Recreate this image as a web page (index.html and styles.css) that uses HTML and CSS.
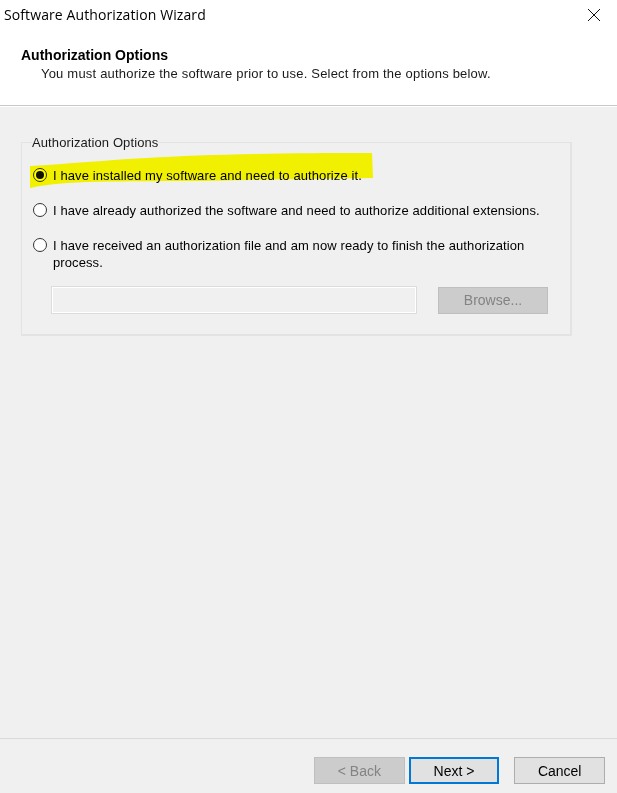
FILE: index.html
```html
<!DOCTYPE html>
<html>
<head>
  <title>Software Authorization Wizard</title>
  <link rel="stylesheet" href="styles.css">
</head>
<body>
  <div class="window">
    <div class="titlebar">
      <span class="title">Software Authorization Wizard</span>
      <span class="close">
        <svg width="14" height="14" viewBox="0 0 14 14"><path d="M1 1 L13 13 M13 1 L1 13" stroke="#111" stroke-width="1" fill="none"/></svg>
      </span>
    </div>

    <div class="header">
      <h1>Authorization Options</h1>
      <p>You must authorize the software prior to use. Select from the options below.</p>
    </div>

    <div class="content">
      <fieldset class="group">
        <legend>Authorization Options</legend>

        <label class="option">
          <span class="radio checked"></span>
          <span>I have installed my software and need to authorize it.</span>
        </label>
        <label class="option">
          <span class="radio"></span>
          <span>I have already authorized the software and need to authorize additional extensions.</span>
        </label>
        <label class="option">
          <span class="radio"></span>
          <span>I have received an authorization file and am now ready to finish the authorization process.</span>
        </label>

        <div class="file-row">
          <div class="file-box"></div>
          <div class="btn disabled browse">Browse...</div>
        </div>
      </fieldset>

      <!-- marker highlight drawn over the first option -->
      <svg class="marker" width="360" height="40" viewBox="0 0 360 40">
        <path d="M3 13 C40 11 80 7 120 5 C180 1 260 0 345 0 L346 25 C300 26 260 26 220 27 C160 29 90 27 40 30 C25 31 12 33 3 35 Z" fill="#ffff00"/>
      </svg>
    </div>

    <div class="footer">
      <div class="btn disabled">&lt; Back</div>
      <div class="btn primary">Next &gt;</div>
      <div class="btn cancel">Cancel</div>
    </div>
  </div>
</body>
</html>
```

FILE: styles.css
```css
/* dialog window */
body {
  margin: 0;
  font-family: "Liberation Sans", Arial, sans-serif;
  color: #000;
}

.window {
  display: flex;
  flex-direction: column;
  height: 793px;
  background-color: #f0f0f0;
}

.titlebar {
  background-color: #fff;
  height: 30px;
  display: flex;
  align-items: center;
  justify-content: space-between;
  padding: 0 0 0 4px;
}

.title {
  font-family: "Open Sans", "Liberation Sans", sans-serif;
  font-size: 14px;
  letter-spacing: 0.1px;
  margin-top: -2px;
}

.close {
  width: 46px;
  display: flex;
  justify-content: center;
}

.header {
  background-color: #fff;
  height: 75px;
  border-bottom: 1px solid #c9c9c9;
  padding-left: 21px;
}

.header h1 {
  margin: 17px 0 0;
  font-size: 14px;
  font-weight: bold;
  letter-spacing: 0;
}

.header p {
  margin: 3px 0 0 20px;
  font-size: 13px;
  letter-spacing: 0.2px;
  color: #1a1a1a;
}

.content {
  flex: 1;
  position: relative;
  padding: 28px 45px 0 21px;
  border-top: 1px solid #fff;
}

.group {
  margin: 0;
  padding: 17px 0 20px 11px;
  border: 2px solid #e3e3e3;
  border-width: 1px 2px 2px 1px;
}

.group legend {
  font-size: 13px;
  letter-spacing: 0.1px;
  padding: 0;
  margin-left: -1px;
  color: #1a1a1a;
}

.option {
  display: flex;
  align-items: flex-start;
  gap: 6px;
  font-size: 13px;
  letter-spacing: 0.1px;
  line-height: 17px;
  margin-bottom: 18px;
  padding-right: 30px;
}

.radio {
  flex: none;
  width: 12px;
  height: 12px;
  border: 1px solid #333;
  border-radius: 50%;
  background-color: #fff;
  margin-top: 1px;
  display: flex;
  align-items: center;
  justify-content: center;
}

.radio.checked::after {
  content: "";
  width: 8px;
  height: 8px;
  border-radius: 50%;
  background-color: #111;
}

.file-row {
  display: flex;
  align-items: center;
  gap: 21px;
  margin: -3px 0 0 18px;
}

.file-box {
  width: 364px;
  height: 26px;
  border: 1px solid #dcdcdc;
  box-shadow: inset 0 0 0 1px #fff;
  background-color: #f0f0f0;
}

.btn {
  box-sizing: border-box;
  height: 27px;
  display: flex;
  align-items: center;
  justify-content: center;
  font-size: 13px;
  border: 1px solid #adadad;
  background-color: #e1e1e1;
}

.btn.disabled {
  background-color: #cccccc;
  border-color: #bfbfbf;
  color: #838383;
}

.browse {
  width: 110px;
  font-size: 14px;
}

.marker {
  position: absolute;
  left: 27px;
  top: 46px;
  mix-blend-mode: multiply;
}

.footer {
  box-sizing: border-box;
  height: 55px;
  border-top: 1px solid #dadada;
  display: flex;
  align-items: flex-start;
  padding: 18px 12px 0 314px;
  gap: 4px;
}

.footer .btn {
  width: 91px;
  height: 27px;
  font-size: 14px;
}

.footer .primary {
  border: 2px solid #0078d7;
}

.footer .cancel {
  margin-left: 11px;
}
```
